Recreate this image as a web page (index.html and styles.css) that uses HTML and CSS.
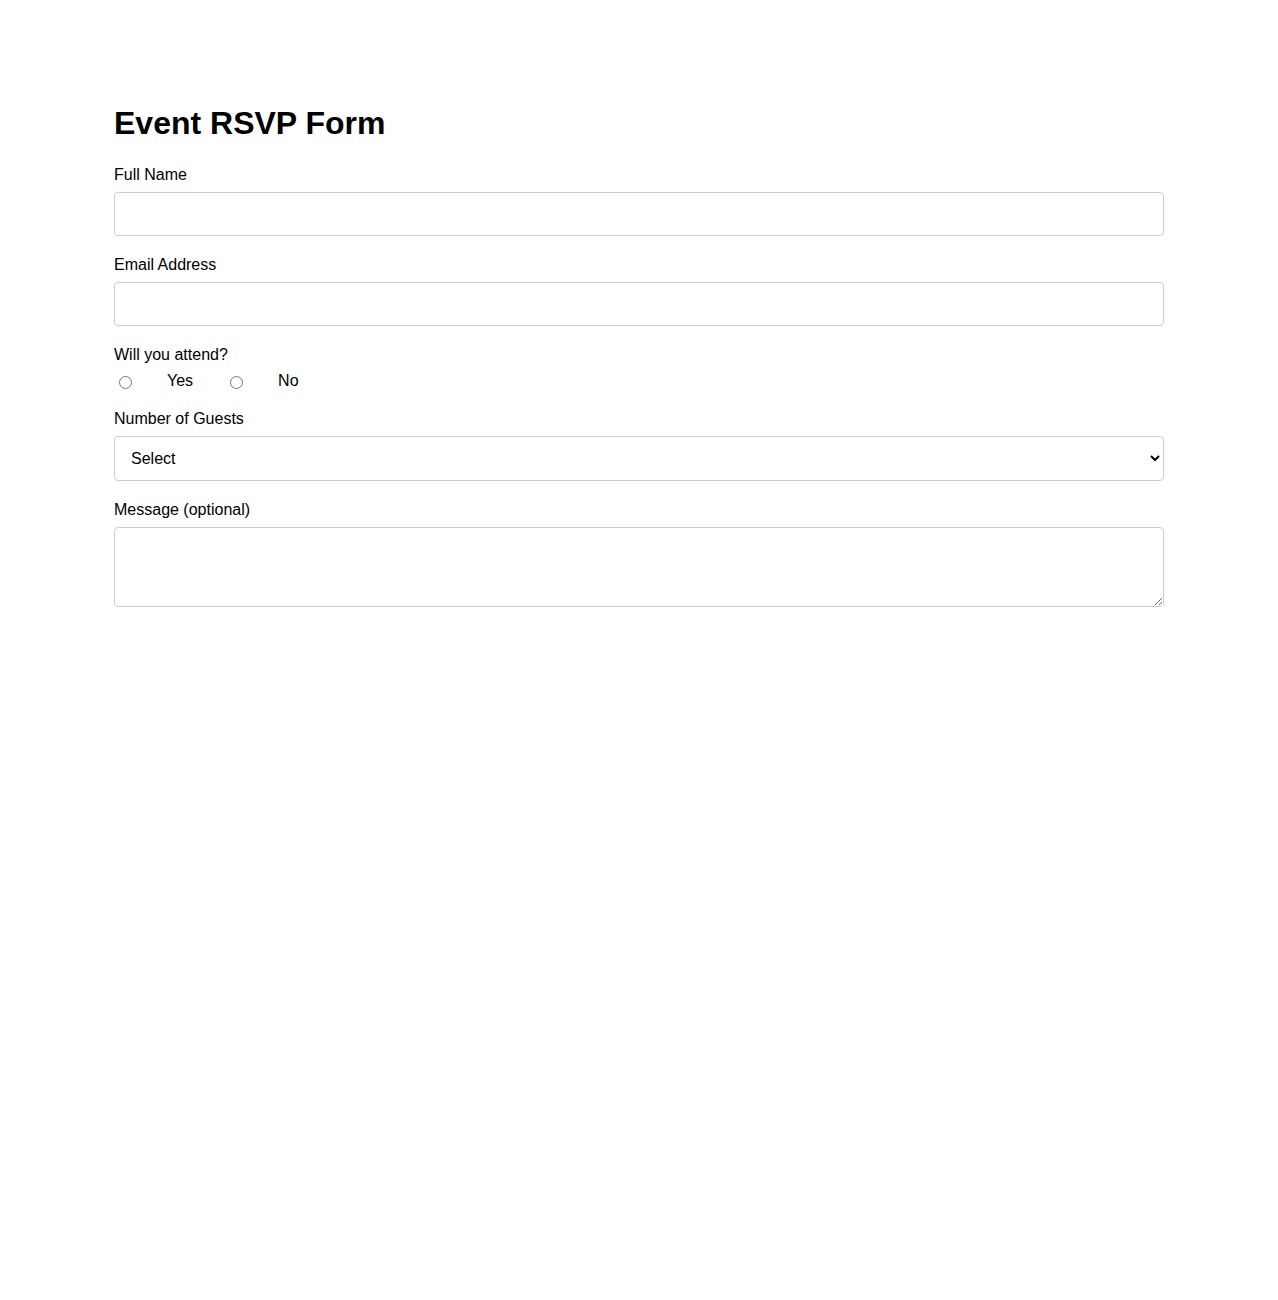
FILE: index.html
```html
<!DOCTYPE html>
<html lang="en">
<head>
<meta charset="utf-8">
<title>Event RSVP Form</title>
<link rel="stylesheet" href="styles.css">
</head>
<body>
<main class="rsvp">
  <h1 class="rsvp-title">Event RSVP Form</h1>
  <form class="rsvp-form">
    <div class="field">
      <label class="field-label" for="name">Full Name</label>
      <input class="control" type="text" id="name" name="name">
    </div>
    <div class="field">
      <label class="field-label" for="email">Email Address</label>
      <input class="control" type="email" id="email" name="email">
    </div>
    <div class="field">
      <span class="field-label">Will you attend?</span>
      <div class="radio-group">
        <input class="radio" type="radio" id="attend-yes" name="attend" value="yes">
        <label class="radio-label" for="attend-yes">Yes</label>
        <input class="radio" type="radio" id="attend-no" name="attend" value="no">
        <label class="radio-label" for="attend-no">No</label>
      </div>
    </div>
    <div class="field">
      <label class="field-label" for="guests">Number of Guests</label>
      <select class="control" id="guests" name="guests">
        <option>Select</option>
        <option>1</option>
        <option>2</option>
        <option>3</option>
        <option>4</option>
      </select>
    </div>
    <div class="field">
      <label class="field-label" for="message">Message (optional)</label>
      <textarea class="control control-area" id="message" name="message"></textarea>
    </div>
  </form>
</main>
</body>
</html>
```

FILE: styles.css
```css
body {
  margin: 0;
  font-family: "Liberation Sans", Arial, sans-serif;
  font-size: 16px;
  color: #000;
  background: #fff;
}

.rsvp {
  max-width: 1050px;
  margin: 0 auto;
  padding: 105px 0 40px;
}

.rsvp-title {
  margin: 0 0 24px;
  font-size: 32px;
  font-weight: bold;
}

.field {
  margin-bottom: 20px;
}

.field-label {
  display: block;
  margin-bottom: 8px;
}

.control {
  display: block;
  width: 100%;
  box-sizing: border-box;
  padding: 12px;
  font-family: "Liberation Sans", Arial, sans-serif;
  font-size: 16px;
  color: #000;
  background: #fff;
  border: 1px solid #ccc;
  border-radius: 4px;
}

.control-area {
  height: 80px;
}

.radio-group {
  display: flex;
  align-items: center;
  height: 18px;
}

.radio {
  margin: 3px 35px 0 5px;
}

.radio-label {
  margin-right: 32px;
}
```
